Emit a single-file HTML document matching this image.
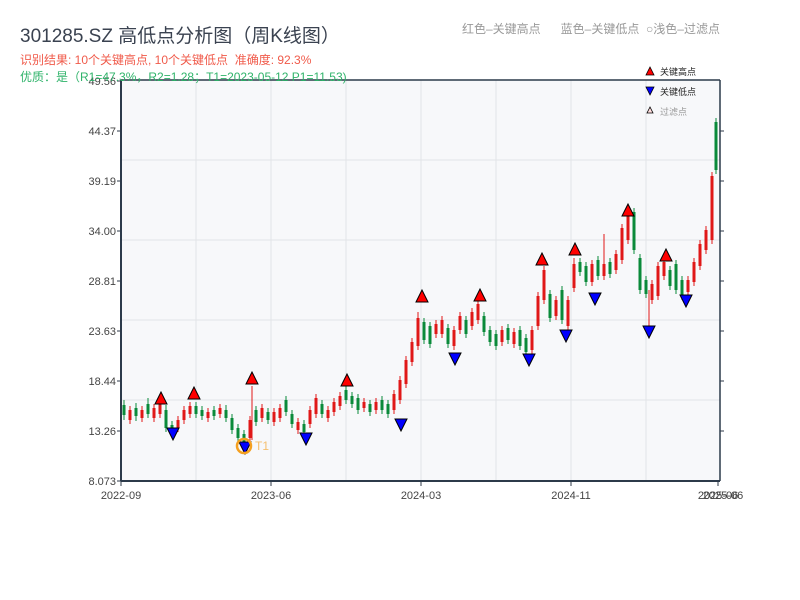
<!DOCTYPE html>
<html><head><meta charset="utf-8"><style>
body{margin:0;width:800px;height:600px;background:#fff;font-family:"Liberation Sans","Noto Sans CJK SC",sans-serif;overflow:hidden;position:relative}
.t{position:absolute;white-space:nowrap}
svg text{font-family:"Liberation Sans","Noto Sans CJK SC",sans-serif}
</style></head><body>
<svg width="800" height="600" style="position:absolute;left:0;top:0">
<rect x="121" y="80" width="599" height="401" fill="#f7f8fa"/>
<g stroke="#e2e4e8">
<line x1="196" y1="80" x2="196" y2="481"/><line x1="271" y1="80" x2="271" y2="481"/><line x1="346" y1="80" x2="346" y2="481"/><line x1="421" y1="80" x2="421" y2="481"/><line x1="496" y1="80" x2="496" y2="481"/><line x1="571" y1="80" x2="571" y2="481"/><line x1="646" y1="80" x2="646" y2="481"/>
<line x1="121" y1="160" x2="720" y2="160"/><line x1="121" y1="240" x2="720" y2="240"/><line x1="121" y1="320" x2="720" y2="320"/><line x1="121" y1="400" x2="720" y2="400"/>
</g>
<g font-size="11" fill="#444" text-anchor="end">
<text x="116" y="85">49.56</text><text x="116" y="135">44.37</text><text x="116" y="185">39.19</text><text x="116" y="235">34.00</text><text x="116" y="285">28.81</text><text x="116" y="335">23.63</text><text x="116" y="385">18.44</text><text x="116" y="435">13.26</text><text x="116" y="485">8.073</text>
</g>
<g stroke="#2c3a4a">
<path d="M117 81H121M117 131H121M117 181H121M117 231H121M117 281H121M117 331H121M117 381H121M117 431H121M117 481H121"/>
<path d="M720 131H724M720 181H724M720 231H724M720 281H724M720 331H724M720 381H724M720 431H724"/>
<path d="M121 481V486M271 481V486M421 481V486M571 481V486M718 481V486"/>
</g>
<g font-size="11" fill="#444" text-anchor="middle">
<text x="121" y="499">2022-09</text><text x="271" y="499">2023-06</text><text x="421" y="499">2024-03</text><text x="571" y="499">2024-11</text><text x="718" y="499">2025-06</text><text x="723" y="499">2025-06</text>
</g>
<!-- green candles -->
<g stroke="#0a8a3a">
<path stroke-width="1" d="M124 400V420M136 403V421M148 398V418M166 405V432M172 421V434M196 402V418M202 406V420M214 406V420M226 405V422M232 414V434M238 424V442M244 430V446M256 406V426M268 408V424M286 396V416M292 410V428M304 420V436M322 400V418M346 386V404M352 392V408M358 394V414M370 400V416M382 396V414M388 400V418M424 318V344M430 322V348M448 324V348M466 316V338M484 312V336M490 326V346M496 330V350M508 324V344M520 326V350M526 334V356M550 290V322M562 286V324M580 258V276M586 262V286M598 256V280M610 258V278M634 208V254M640 254V294M646 276V298M670 266V290M676 260V294M682 276V300M716 118V174"/>
<path stroke-width="3" d="M124 405V415M136 408V416M148 404V414M166 410V428M172 425V430M196 406V414M202 410V416M214 410V416M226 410V418M232 418V430M238 428V438M244 434V442M256 410V422M268 412V420M286 400V412M292 414V424M304 424V432M322 404V414M346 390V400M352 396V404M358 398V410M370 404V412M382 400V410M388 404V414M424 322V340M430 326V344M448 328V344M466 320V334M484 316V332M490 330V342M496 334V346M508 328V340M520 330V346M526 338V352M550 294V318M562 290V320M580 262V272M586 266V282M598 260V276M610 262V274M634 212V250M640 258V290M646 280V294M670 270V286M676 264V290M682 280V296M716 122V170"/>
</g>
<!-- red candles -->
<g stroke="#e01818">
<path stroke-width="1" d="M130 406V424M142 406V422M154 404V422M160 400V418M178 416V432M184 406V424M190 402V418M208 408V422M220 404V418M250 416V442M262 404V422M274 408V426M280 404V422M298 418V434M310 406V428M316 394V418M328 406V422M334 398V416M340 392V410M364 398V412M376 398V414M394 390V414M400 376V404M406 356V388M412 338V366M418 312V350M436 320V338M442 316V338M454 326V350M460 312V334M472 308V330M478 300V324M502 326V346M514 328V348M532 326V354M538 292V330M544 266V304M556 296V320M568 296V330M574 258V292M592 260V286M604 234V280M616 250V274M622 224V264M628 210V244M652 280V304M658 262V300M664 258V280M688 276V296M694 258V286M700 240V270M706 226V254M712 172V244M720 110V174M252 386V440M649 290V326"/>
<path stroke-width="3" fill="none" d="M130 410V420M142 410V418M154 408V418M160 404V414M178 420V428M184 410V420M190 406V414M208 412V418M220 408V414M250 420V438M262 408V418M274 412V422M280 408V418M298 422V430M310 410V424M316 398V414M328 410V418M334 402V412M340 396V406M364 402V408M376 402V410M394 394V410M400 380V400M406 360V384M412 342V362M418 318V346M436 324V334M442 320V334M454 330V346M460 316V330M472 312V326M478 304V320M502 330V342M514 332V344M532 330V350M538 296V326M544 270V300M556 300V316M568 300V326M574 264V288M592 264V282M604 264V276M616 254V270M622 228V260M628 214V240M652 284V300M658 266V296M664 262V276M688 280V292M694 262V282M700 244V266M706 230V250M712 176V240"/>
</g>
<g fill="#f00" stroke="#000" stroke-width="1">
<polygon points="161,392 155,404 167,404"/><polygon points="194,387 188,399 200,399"/><polygon points="252,372 246,384 258,384"/><polygon points="347,374 341,386 353,386"/><polygon points="422,290 416,302 428,302"/><polygon points="480,289 474,301 486,301"/><polygon points="542,253 536,265 548,265"/><polygon points="575,243 569,255 581,255"/><polygon points="628,204 622,216 634,216"/><polygon points="666,249 660,261 672,261"/>
</g>
<g fill="#00f" stroke="#000" stroke-width="1">
<polygon points="173,440 167,428 179,428"/><polygon points="245,454 239,442 251,442"/><polygon points="306,445 300,433 312,433"/><polygon points="401,431 395,419 407,419"/><polygon points="455,365 449,353 461,353"/><polygon points="529,366 523,354 535,354"/><polygon points="566,342 560,330 572,330"/><polygon points="595,305 589,293 601,293"/><polygon points="649,338 643,326 655,326"/><polygon points="686,307 680,295 692,295"/>
</g>
<circle cx="244" cy="446" r="7" fill="none" stroke="#f5a020" stroke-width="2.5"/>
<text x="255" y="450" font-size="12" fill="#f5c070">T1</text>
<g stroke="#2c3a4a">
<line x1="121" y1="80" x2="720" y2="80" stroke-width="1.5"/><line x1="121" y1="80" x2="121" y2="481" stroke-width="2"/><line x1="720" y1="80" x2="720" y2="481" stroke-width="1.5"/><line x1="121" y1="481" x2="720" y2="481" stroke-width="2"/>
</g>
<polygon points="650,67 646,75 654,75" fill="#f00" stroke="#000" stroke-width="0.8"/><text x="660" y="75" font-size="9" fill="#222">关键高点</text>
<polygon points="650,95 646,87 654,87" fill="#00f" stroke="#000" stroke-width="0.8"/><text x="660" y="95" font-size="9" fill="#222">关键低点</text>
<polygon points="650,107 647,113 653,113" fill="#fdd" stroke="#000" stroke-width="0.8"/><text x="660" y="115" font-size="9" fill="#999">过滤点</text>
</svg>
<div class="t" style="left:20px;top:21px;font-size:19px;color:#3a4250">301285.SZ 高低点分析图（周K线图）</div>
<div class="t" style="left:20px;top:51px;font-size:12px;color:#f05a4a">识别结果: 10个关键高点, 10个关键低点 &nbsp;准确度: 92.3%</div>
<div class="t" style="left:20px;top:68px;font-size:12px;color:#2fb36a">优质：是（R1=47.3%，R2=1.28；T1=2023-05-12 P1=11.53)</div>
<div class="t" style="left:462px;top:20px;font-size:12px;color:#999">红色–关键高点 &nbsp;&nbsp;&nbsp;&nbsp; 蓝色–关键低点 &nbsp;○浅色–过滤点</div>
</body></html>
